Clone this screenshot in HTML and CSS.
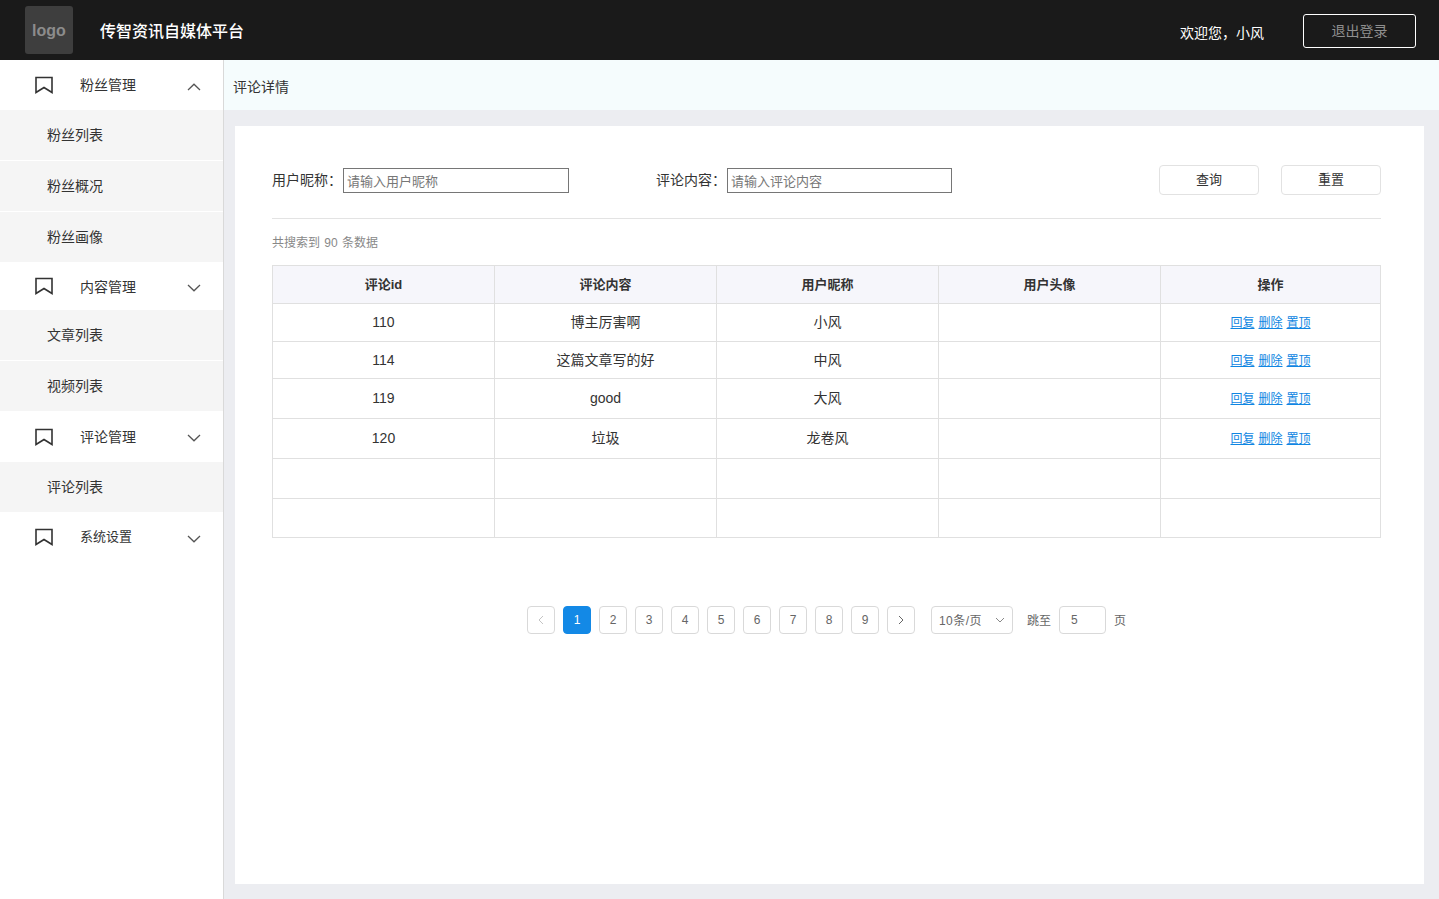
FILE: index.html
```html
<!DOCTYPE html>
<html lang="zh-CN">
<head>
<meta charset="utf-8">
<title>传智资讯自媒体平台</title>
<link rel="stylesheet" href="styles.css">
</head>
<body>
<svg class="sprite" width="0" height="0" aria-hidden="true">
  <symbol id="bookmark" viewBox="0 0 20 18"><path d="M2 1.5H18V16.5L10 11.5L2 16.5Z" fill="none" stroke="currentColor" stroke-width="1.6" stroke-linejoin="miter"/></symbol>
  <symbol id="up" viewBox="0 0 14 8"><path d="M1 7L7 1.2L13 7" fill="none" stroke="currentColor" stroke-width="1.3"/></symbol>
  <symbol id="down" viewBox="0 0 14 8"><path d="M1 1L7 6.8L13 1" fill="none" stroke="currentColor" stroke-width="1.3"/></symbol>
</svg>
<header class="topbar">
  <div class="logo">logo</div>
  <div class="brand">传智资讯自媒体平台</div>
  <div class="welcome">欢迎您，小风</div>
  <button class="logout">退出登录</button>
</header>
<div class="shell">
  <aside class="sidebar">
    <div class="group h50"><svg class="mark"><use href="#bookmark"/></svg><span class="group-name">粉丝管理</span><svg class="caret"><use href="#up"/></svg></div>
    <div class="sub h50">粉丝列表</div>
    <div class="sub h50 gap">粉丝概况</div>
    <div class="sub h50 gap">粉丝画像</div>
    <div class="group h48"><svg class="mark"><use href="#bookmark"/></svg><span class="group-name low">内容管理</span><svg class="caret"><use href="#down"/></svg></div>
    <div class="sub h50">文章列表</div>
    <div class="sub h50 gap">视频列表</div>
    <div class="group h51"><svg class="mark"><use href="#bookmark"/></svg><span class="group-name">评论管理</span><svg class="caret"><use href="#down"/></svg></div>
    <div class="sub h50">评论列表</div>
    <div class="group h50"><svg class="mark"><use href="#bookmark"/></svg><span class="group-name small">系统设置</span><svg class="caret"><use href="#down"/></svg></div>
  </aside>
  <main class="main">
    <div class="crumb">评论详情</div>
    <section class="card">
      <div class="filters">
        <label class="field field-a"><span class="label">用户昵称<i class="colon">：</i></span><input class="input" placeholder="请输入用户昵称"></label>
        <label class="field field-b"><span class="label">评论内容<i class="colon">：</i></span><input class="input" placeholder="请输入评论内容"></label>
        <button class="btn">查询</button>
        <button class="btn">重置</button>
      </div>
      <div class="count">共搜索到 90 条数据</div>
      <table class="table">
        <thead>
          <tr class="r38"><th>评论id</th><th>评论内容</th><th>用户昵称</th><th>用户头像</th><th class="last">操作</th></tr>
        </thead>
        <tbody>
          <tr class="r38"><td>110</td><td>博主厉害啊</td><td>小风</td><td></td><td class="links"><a href="#">回复</a><a href="#">删除</a><a href="#">置顶</a></td></tr>
          <tr class="r37"><td>114</td><td>这篇文章写的好</td><td>中风</td><td></td><td class="links"><a href="#">回复</a><a href="#">删除</a><a href="#">置顶</a></td></tr>
          <tr class="r40"><td>119</td><td>good</td><td>大风</td><td></td><td class="links"><a href="#">回复</a><a href="#">删除</a><a href="#">置顶</a></td></tr>
          <tr class="r40"><td>120</td><td>垃圾</td><td>龙卷风</td><td></td><td class="links"><a href="#">回复</a><a href="#">删除</a><a href="#">置顶</a></td></tr>
          <tr class="r40"><td></td><td></td><td></td><td></td><td></td></tr>
          <tr class="r39"><td></td><td></td><td></td><td></td><td></td></tr>
        </tbody>
      </table>
      <nav class="pager">
        <span class="page arrow"><svg width="6" height="10" viewBox="0 0 6 10"><path d="M5 1L1 5L5 9" fill="none" stroke="#c4c4c4" stroke-width="1"/></svg></span>
        <span class="page active">1</span>
        <span class="page">2</span>
        <span class="page">3</span>
        <span class="page">4</span>
        <span class="page">5</span>
        <span class="page">6</span>
        <span class="page">7</span>
        <span class="page">8</span>
        <span class="page">9</span>
        <span class="page arrow"><svg width="6" height="10" viewBox="0 0 6 10"><path d="M1 1L5 5L1 9" fill="none" stroke="#666" stroke-width="1"/></svg></span>
        <span class="size"><span class="size-text">10条/页</span><svg width="10" height="6" viewBox="0 0 10 6"><path d="M1 1L5 5L9 1" fill="none" stroke="#888" stroke-width="1"/></svg></span>
        <span class="jump">跳至</span>
        <span class="jump-box">5</span>
        <span class="unit">页</span>
      </nav>
    </section>
  </main>
</div>
</body>
</html>
```
FILE: styles.css
```css
* { box-sizing: border-box; }
html, body { margin: 0; height: 899px; overflow: hidden; }
body { font-family: "Liberation Sans", "Noto Sans CJK SC", sans-serif; color: #333; background: #fff; line-height: 20px; }
.sprite { position: absolute; }

.topbar { height: 60px; background: #1a1a1a; display: flex; align-items: center; padding-left: 25px; }
.logo { width: 48px; height: 48px; border-radius: 3px; background: #3e3e3e; color: #8c8c8c; font-size: 16px; font-weight: 700; display: flex; align-items: center; justify-content: center; padding-top: 1px; }
.brand { margin-left: 27px; color: #fff; font-size: 16px; font-weight: 500; padding-top: 4px; }
.welcome { margin-left: auto; color: #fff; font-size: 14px; padding-top: 5px; }
.logout { width: 113px; height: 34px; margin: 2px 23px 0 39px; background: transparent; border: 1px solid #fff; border-radius: 3px; color: #8f8f8f; font: 14px/20px "Liberation Sans", "Noto Sans CJK SC", sans-serif; padding: 0; }

.shell { display: flex; height: 839px; }
.sidebar { width: 224px; border-right: 1px solid #d9d9d9; background: #fff; flex: none; }
.group { display: flex; align-items: center; font-size: 14px; color: #333; background: #fff; padding-left: 34px; }
.h50 { height: 50px; }
.h48 { height: 48px; }
.h51 { height: 51px; }
.mark { width: 20px; height: 18px; color: #333; flex: none; }
.group-name { margin-left: 26px; width: 107px; }
.group-name.small { font-size: 13px; }
.group-name.low { padding-top: 2px; }
.caret { width: 14px; height: 8px; color: #555; flex: none; margin-top: 3px; }
.sub { display: flex; align-items: center; padding-left: 47px; font-size: 14px; color: #333; background: #f5f5f5; }
.gap { box-sizing: content-box; border-top: 1px solid #fff; }

.main { flex: 1; background: #ecedf1; min-width: 0; }
.crumb { height: 50px; background: #f5fcfd; padding: 17px 0 0 9px; font-size: 14px; line-height: 20px; color: #333; }
.card { height: 758px; margin: 16px 15px 0 11px; background: #fff; padding: 39px 43px 0 37px; }

.filters { display: flex; height: 54px; padding-bottom: 24px; border-bottom: 1px solid #e3e3e3; align-items: center; }
.field { display: flex; align-items: center; font-size: 14px; color: #333; }
.field-a { width: 384px; }
.field-b { flex: 1; }
.label { width: 71px; flex: none; white-space: nowrap; }
.colon { font-style: normal; }
.input { margin: 2px 0 0 0; width: 226px; height: 25px; border: 1px solid #767676; border-radius: 0; padding: 2px 3px 0; font: 13px "Liberation Sans", "Noto Sans CJK SC", sans-serif; outline: none; }
.field-b .input { width: 225px; }
.input::placeholder { color: #777; }
.btn { width: 100px; height: 30px; margin-left: 22px; background: #fff; border: 1px solid #e2e2e2; border-radius: 4px; color: #333; font: 13px/20px "Liberation Sans", "Noto Sans CJK SC", sans-serif; padding: 0; }
.btn:first-of-type { margin-left: 0; }

.count { height: 46px; padding-top: 16px; font-size: 12px; line-height: 16px; color: #888; word-spacing: 1px; }

.table { width: 1109px; table-layout: fixed; border-collapse: collapse; font-size: 14px; color: #333; }
.table th, .table td { border: 1px solid #e0e0e0; padding: 0 0 2px; text-align: center; width: 222px; }
.table th { background: #f6f6fb; font-size: 13px; font-weight: 700; color: #333; padding: 0; }
.table .last { width: 220px; }
.r38 { height: 38px; }
.r37 { height: 37px; }
.r40 { height: 40px; }
.r39 { height: 39px; }
.table .r37 td { padding: 0; }
.table .links { font-size: 12px; padding: 0; }
.table .r37 .links { padding: 2px 0 0; }
.links a { color: #0f86e2; text-decoration: underline; margin: 0 2px; }

.pager { display: flex; align-items: center; justify-content: flex-start; margin: 67px 0 0 255px; height: 30px; font-size: 12px; color: #666; }
.page { width: 28px; height: 28px; border: 1px solid #d9d9d9; border-radius: 4px; display: flex; align-items: center; justify-content: center; margin-right: 8px; background: #fff; }
.active { background: #1389e6; border-color: #1389e6; color: #fff; }
.size { width: 82px; height: 28px; margin-left: 8px; border: 1px solid #d9d9d9; border-radius: 4px; display: flex; align-items: center; justify-content: space-between; padding: 0 7px; }
.size-text { letter-spacing: .45px; padding-top: 2px; }
.jump { margin-left: 14px; padding-top: 2px; }
.jump-box { width: 47px; height: 28px; margin-left: 8px; border: 1px solid #d9d9d9; border-radius: 4px; display: flex; align-items: center; padding-left: 11px; }
.unit { margin-left: 8px; padding-top: 2px; }
```
